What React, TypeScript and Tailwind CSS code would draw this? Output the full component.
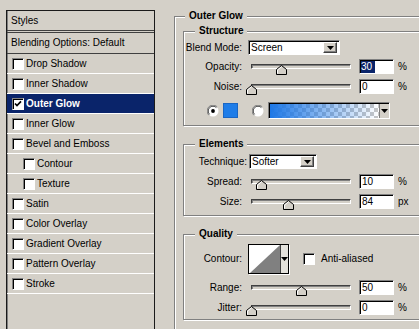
import React from 'react';

type StyleItem = { label: string; checked?: boolean; selected?: boolean; indent?: boolean };

const styleItems: StyleItem[] = [
  { label: 'Drop Shadow' },
  { label: 'Inner Shadow' },
  { label: 'Outer Glow', checked: true, selected: true },
  { label: 'Inner Glow' },
  { label: 'Bevel and Emboss' },
  { label: 'Contour', indent: true },
  { label: 'Texture', indent: true },
  { label: 'Satin' },
  { label: 'Color Overlay' },
  { label: 'Gradient Overlay' },
  { label: 'Pattern Overlay' },
  { label: 'Stroke' },
];

const sunken =
  'border border-t-[#808080] border-l-[#808080] border-b-white border-r-white shadow-[inset_1px_1px_0_#000]';
const groupBox =
  'min-w-0 border border-[#808080] shadow-[inset_1px_1px_0_#fff,1px_1px_0_#fff]';

function Checkbox({ checked }: { checked?: boolean }) {
  return (
    <span className={`w-[12px] h-[12px] shrink-0 bg-white flex items-center justify-center ${sunken}`}>
      {checked && (
        <svg width="8" height="8" viewBox="0 0 8 8">
          <path d="M1 3.5L3 5.6L7 1.4" stroke="#000" strokeWidth="1.7" fill="none" />
        </svg>
      )}
    </span>
  );
}

function Radio({ checked }: { checked?: boolean }) {
  return (
    <svg width="12" height="12" viewBox="0 0 12 12" className="shrink-0">
      <circle cx="6" cy="6" r="5.5" fill="#fff" />
      <path d="M1.8 10.2A5.6 5.6 0 0 1 10.2 1.8" stroke="#808080" fill="none" />
      <path d="M2.6 9.4A4.6 4.6 0 0 1 9.4 2.6" stroke="#404040" fill="none" />
      {checked && <circle cx="6" cy="6" r="1.9" fill="#000" />}
    </svg>
  );
}

function DropArrow() {
  return (
    <svg width="7" height="4" viewBox="0 0 7 4">
      <path d="M0 0H7L3.5 4Z" fill="#000" />
    </svg>
  );
}

function Select({ text, className }: { text: string; className: string }) {
  return (
    <div className={`h-[15px] bg-white flex items-center justify-between pl-[2px] pr-[2px] ${sunken} ${className}`}>
      <span>{text}</span>
      <span className="w-[14px] h-[11px] bg-[#d4d0c8] flex items-center justify-center border border-t-white border-l-white border-b-[#404040] border-r-[#404040] shadow-[inset_-1px_-1px_0_#808080]">
        <DropArrow />
      </span>
    </div>
  );
}

function Slider({ pos }: { pos: number }) {
  return (
    <div className="relative w-[100px] h-[15px] shrink-0">
      <div className="absolute left-0 right-0 top-[5px] h-[5px] bg-[#d4d0c8] border border-t-[#404040] border-l-[#404040] border-b-white border-r-white shadow-[inset_1px_1px_0_#808080]" />
      <svg className="absolute top-[6px]" style={{ left: pos - 5 }} width="11" height="10" viewBox="0 0 11 10">
        <path d="M0.5 9.5V4.5L5.5 0.5L10.5 4.5V9.5Z" fill="#d4d0c8" stroke="#000" />
        <path d="M1.5 8.5V5L5.5 1.8" fill="none" stroke="#fff" />
      </svg>
    </div>
  );
}

function NumBox({ value, selected }: { value: string; selected?: boolean }) {
  return (
    <div className={`w-[35px] h-[15px] bg-white flex items-stretch pl-[1px] pt-[1px] ${sunken}`}>
      {selected ? (
        <span className="bg-[#0a246a] text-white pr-[3px] flex items-center">{value}</span>
      ) : (
        <span className="pl-[1px] flex items-center">{value}</span>
      )}
    </div>
  );
}

function SliderRow({
  label,
  pos,
  value,
  unit,
  selected,
  className,
}: {
  label: string;
  pos: number;
  value: string;
  unit: string;
  selected?: boolean;
  className: string;
}) {
  return (
    <div className={`flex items-center h-[15px] ${className}`}>
      <span className="w-[58px] text-right">{label}</span>
      <div className="ml-[9px]">
        <Slider pos={pos} />
      </div>
      <div className="ml-[8px]">
        <NumBox value={value} selected={selected} />
      </div>
      <span className="ml-[4px]">{unit}</span>
    </div>
  );
}

function StylesPanel() {
  return (
    <div className="ml-[6px] mt-[10px] w-[149px] h-[330px] shrink-0 border border-[#1a1a1a] shadow-[inset_1px_0_0_#808080]">
      <div className="h-[22px] pl-[4px] flex items-center border-b-[3px] border-double border-[#404040]">Styles</div>
      <div className="h-[21px] pl-[4px] flex items-center border-b border-[#404040]">Blending Options: Default</div>
      {styleItems.map((item) => (
        <div
          key={item.label}
          className={`h-[20px] flex items-center gap-[2px] border-b border-white ${item.indent ? 'pl-[16px]' : 'pl-[5px]'} ${
            item.selected ? 'bg-[#0a246a] text-white font-bold' : ''
          }`}
        >
          <Checkbox checked={item.checked} />
          <span>{item.label}</span>
        </div>
      ))}
    </div>
  );
}

function OuterGlowPanel() {
  return (
    <fieldset className={`ml-[19px] mt-[10px] w-[270px] h-[340px] shrink-0 px-[8px] ${groupBox}`}>
      <legend className="ml-[2px] px-1 font-bold leading-[12px] bg-[#d4d0c8]">Outer Glow</legend>

      <fieldset className={`mt-[3px] pb-[6px] ${groupBox}`}>
        <legend className="ml-[11px] px-1 font-bold leading-[12px] bg-[#d4d0c8]">Structure</legend>
        <div className="mt-[3px] flex items-center h-[15px]">
          <span className="w-[58px] text-right">Blend Mode:</span>
          <Select text="Screen" className="ml-[6px] w-[92px]" />
        </div>
        <SliderRow label="Opacity:" pos={30} value="30" unit="%" selected className="mt-[4px]" />
        <SliderRow label="Noise:" pos={0} value="0" unit="%" className="mt-[5px]" />
        <div className="mt-[8px] flex items-center h-[17px]">
          <div className="ml-[23px]">
            <Radio checked />
          </div>
          <span className="ml-[4px] w-[15px] h-[15px] bg-[#1f7de8] border border-[#1a66c4]" />
          <div className="ml-[14px]">
            <Radio />
          </div>
          <div className={`ml-[4px] w-[122px] h-[17px] flex ${sunken}`}>
            <div className="flex-1 mt-[1px] ml-[1px] bg-[image:linear-gradient(to_right,#1e78e6,rgba(30,120,230,0)),repeating-conic-gradient(#c6c6c6_0_25%,#ffffff_0_50%)] bg-[length:100%_100%,8px_8px]" />
            <div className="w-[10px] mt-[1px] bg-[#d4d0c8] border-l border-[#808080] flex items-center justify-center">
              <DropArrow />
            </div>
          </div>
        </div>
      </fieldset>

      <fieldset className={`mt-[12px] pb-[6px] ${groupBox}`}>
        <legend className="ml-[11px] px-1 font-bold leading-[12px] bg-[#d4d0c8]">Elements</legend>
        <div className="mt-[4px] flex items-center h-[15px]">
          <span className="w-[63px] text-right">Technique:</span>
          <Select text="Softer" className="ml-[2px] w-[68px]" />
        </div>
        <SliderRow label="Spread:" pos={10} value="10" unit="%" className="mt-[5px]" />
        <SliderRow label="Size:" pos={37} value="84" unit="px" className="mt-[5px]" />
      </fieldset>

      <fieldset className={`mt-[12px] pb-[4px] ${groupBox}`}>
        <legend className="ml-[11px] px-1 font-bold leading-[12px] bg-[#d4d0c8]">Quality</legend>
        <div className="mt-[4px] flex items-center h-[30px]">
          <span className="w-[58px] text-right">Contour:</span>
          <div className="ml-[6px] w-[41px] h-[30px] flex border border-[#000] shadow-[1px_1px_0_#fff]">
            <div className="w-[31px] bg-white">
              <svg width="31" height="28" viewBox="0 0 31 28">
                <path d="M1 28L31 0V28Z" fill="#808080" />
              </svg>
            </div>
            <div className="flex-1 bg-[#e4e2dc] border-l border-[#404040] flex items-center justify-center">
              <DropArrow />
            </div>
          </div>
          <div className="ml-[14px]">
            <Checkbox />
          </div>
          <span className="ml-[6px]">Anti-aliased</span>
        </div>
        <SliderRow label="Range:" pos={50} value="50" unit="%" className="mt-[6px]" />
        <SliderRow label="Jitter:" pos={0} value="0" unit="%" className="mt-[5px]" />
      </fieldset>
    </fieldset>
  );
}

export default function App() {
  return (
    <div className="w-[419px] h-[329px] overflow-hidden bg-[#d4d0c8] flex items-start font-['Liberation_Sans',Arial,sans-serif] text-[10px] leading-[12px] text-black">
      <StylesPanel />
      <OuterGlowPanel />
    </div>
  );
}
